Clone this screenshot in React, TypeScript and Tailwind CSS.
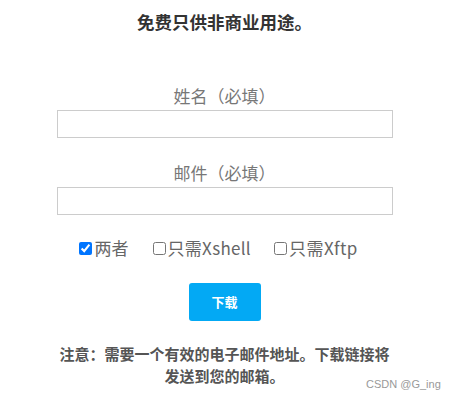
import React from "react";

export default function App() {
  return (
    <div className="relative w-[449px] h-[400px] bg-white font-['Noto_Sans_CJK_SC','Noto_Sans',sans-serif] flex flex-col items-center pt-[10px]">
      <h1 className="text-[17.5px] leading-[24px] font-bold text-[#333]">免费只供非商业用途。</h1>
      <form className="w-[336px] flex flex-col mt-[50px]">
        <label className="text-center text-[17px] leading-[24px] text-[#777]">姓名（必填）</label>
        <input type="text" className="mt-[2px] h-[28px] border border-[#ccc] outline-none px-2" />
        <label className="mt-[23px] text-center text-[17px] leading-[24px] text-[#777]">邮件（必填）</label>
        <input type="email" className="mt-[2px] h-[28px] border border-[#ccc] outline-none px-2" />
        <div className="mt-[21px] h-[24px] flex items-center pl-[22px] text-[17px] leading-[24px] text-[#666]">
          <label className="flex items-center gap-[3px]">
            <input type="checkbox" defaultChecked className="m-0 w-[13px] h-[13px]" />
            <span>两者</span>
          </label>
          <label className="ml-[24px] flex items-center gap-[2px]">
            <input type="checkbox" className="m-0 w-[13px] h-[13px]" />
            <span className="tracking-[0.3px]">只需Xshell</span>
          </label>
          <label className="ml-[23px] flex items-center gap-[2px]">
            <input type="checkbox" className="m-0 w-[13px] h-[13px]" />
            <span className="tracking-[0.5px]">只需Xftp</span>
          </label>
        </div>
        <div className="mt-[23px] flex justify-center">
          <button type="button" className="w-[72px] h-[38px] rounded-[3px] bg-[#03a9f4] text-white text-[13px] font-bold">下载</button>
        </div>
        <div className="mt-[22px] flex flex-col items-center text-[15px] leading-[22px] font-bold text-[#555]">
          <span>注意：需要一个有效的电子邮件地址。下载链接将</span>
          <span>发送到您的邮箱。</span>
        </div>
      </form>
      <span className="absolute left-[366px] top-[378px] text-[11px] leading-[13px] text-[#999] font-['Liberation_Sans',sans-serif]">CSDN @G_ing</span>
    </div>
  );
}
